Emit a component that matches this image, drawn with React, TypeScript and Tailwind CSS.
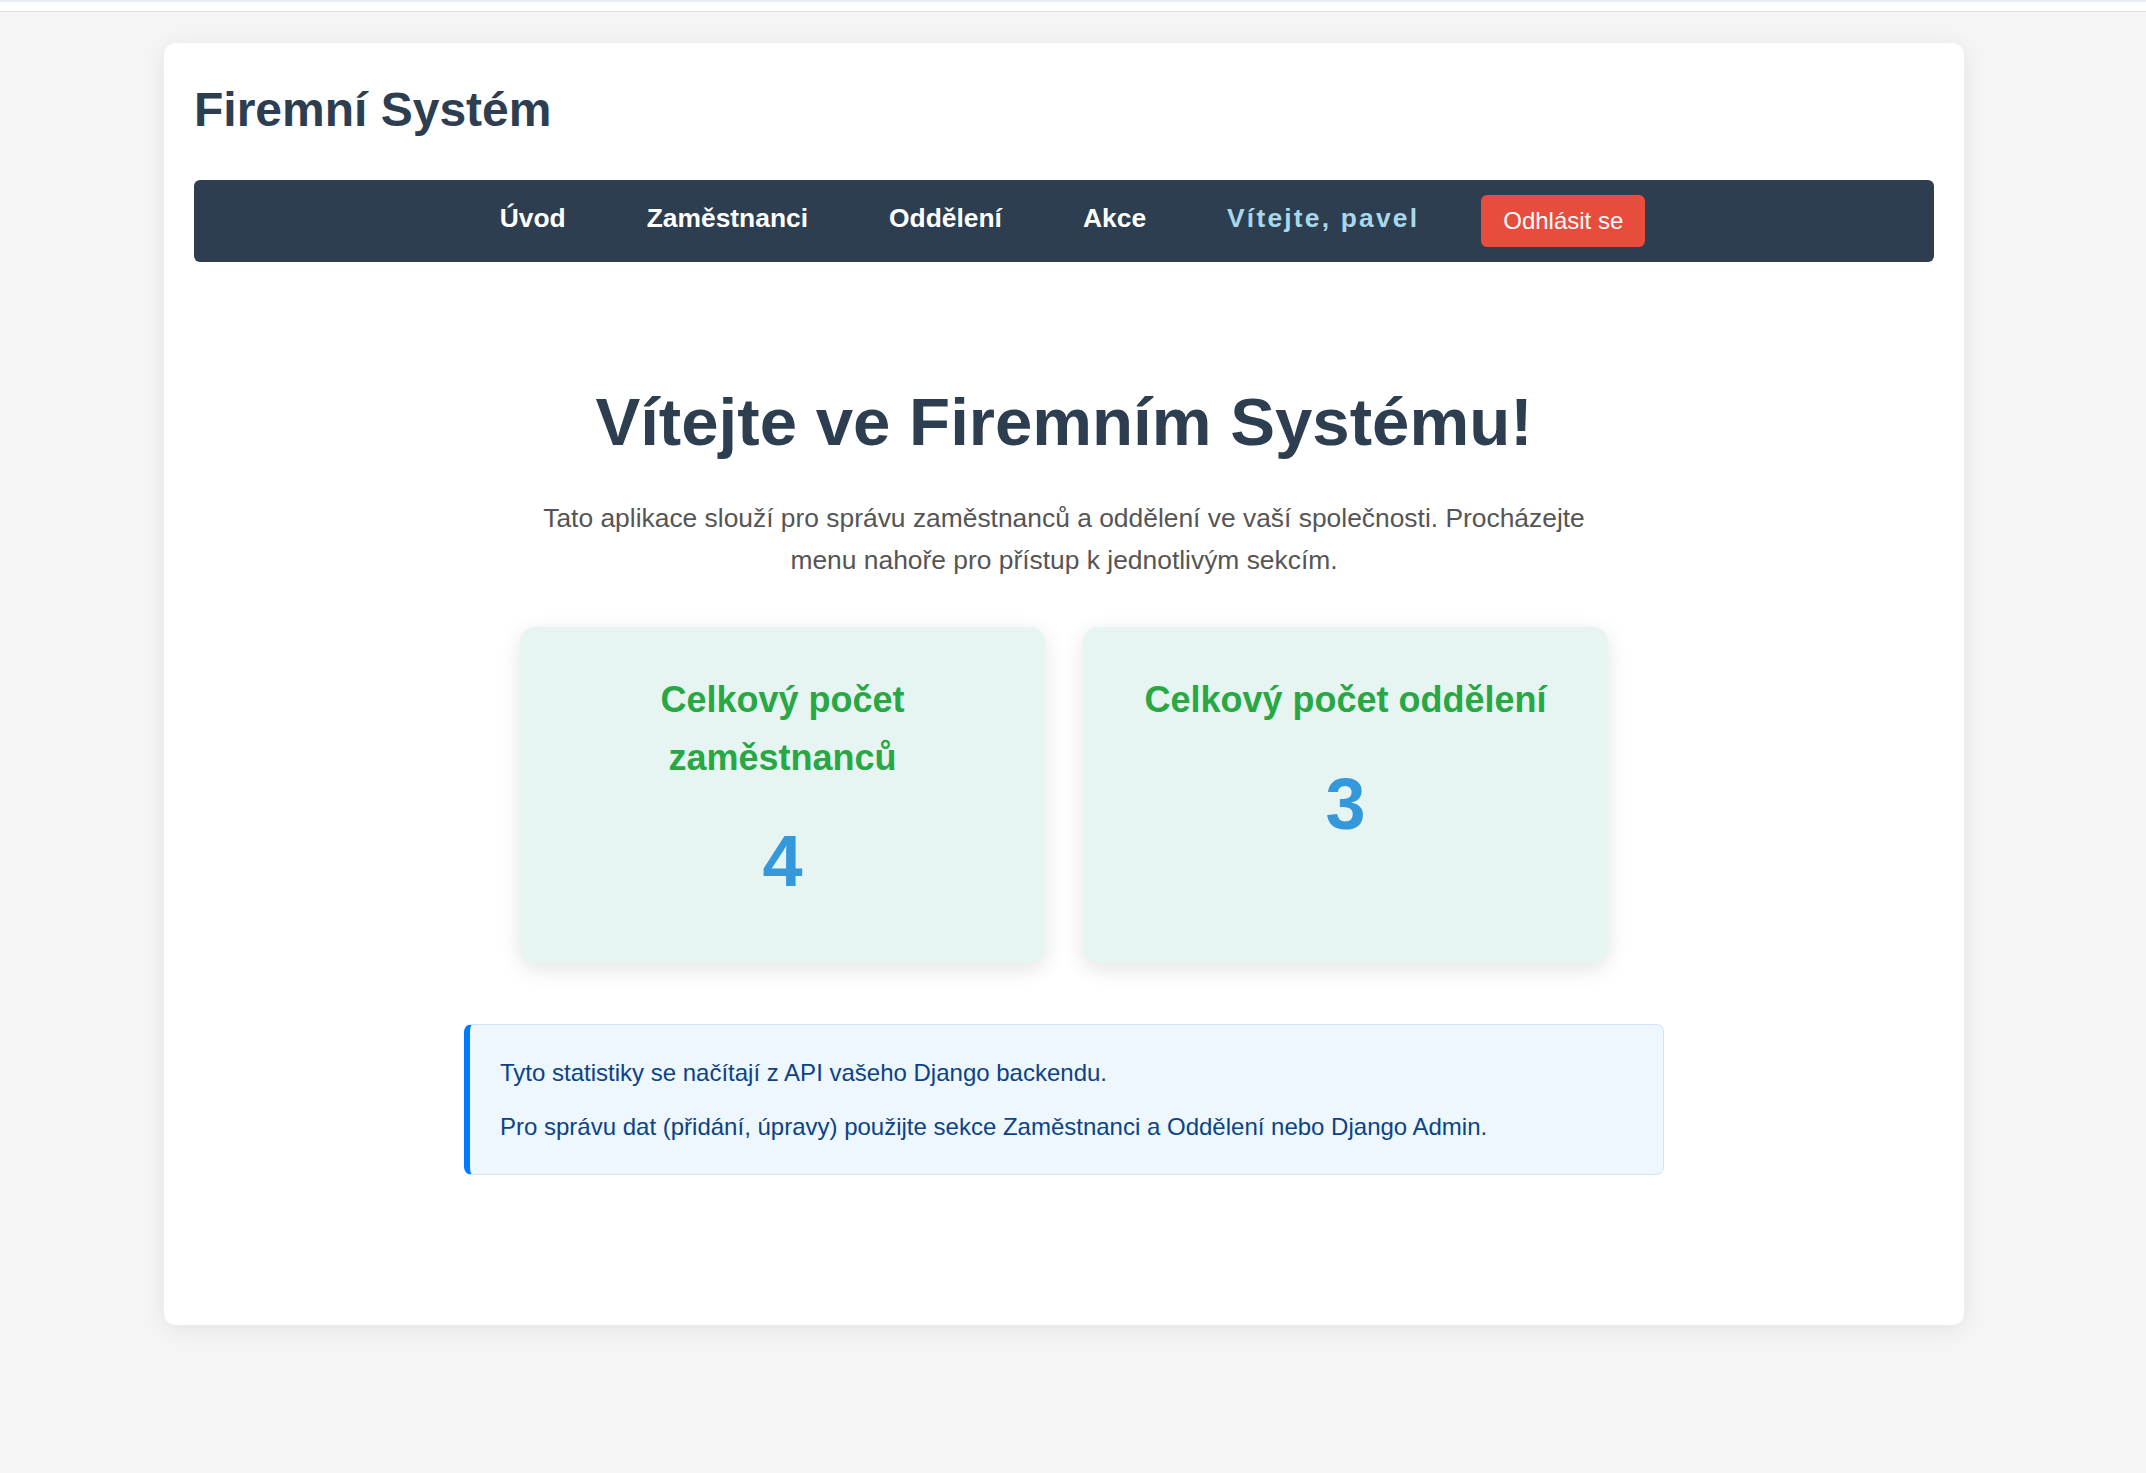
import React from "react";

const font = { fontFamily: '"Liberation Sans", Arial, Helvetica, sans-serif' };

function StatCard({ title, value }: { title: string; value: string }) {
  return (
    <div className="w-[525px] rounded-[15px] bg-[#e6f5f1] px-[30px] pt-[44px] pb-[66px] text-center shadow-[0_6px_22px_rgba(0,0,0,0.11)]">
      <h3 className="text-[36px] font-bold leading-[57.6px] text-[#28a745]">{title}</h3>
      <p className="mt-[39px] text-[72px] font-bold leading-[72px] text-[#3498db]">{value}</p>
    </div>
  );
}

export default function App() {
  const links = ["Úvod", "Zaměstnanci", "Oddělení", "Akce"];
  return (
    <div style={font} className="min-h-screen bg-[#f4f5f4]">
      <div className="h-[12px] border-t-2 border-b border-t-[#e8eef8] border-b-[#e2e4e4] bg-white" />
      <div className="pr-[18px] pt-[31px] pb-[40px]">
        <div className="mx-auto w-[1800px] rounded-[12px] bg-white px-[30px] pt-[38px] pb-[150px] shadow-[0_4px_22px_rgba(0,0,0,0.08)]">
          <h1 className="text-[48px] font-bold leading-[57.6px] text-[#2c3e50]">Firemní Systém</h1>

          <nav className="mt-[41px] flex h-[82px] items-center justify-center rounded-[6px] bg-[#2c3e50] pl-[17px]">
            <ul className="flex items-center gap-[81px] pb-[5px]">
              {links.map((l) => (
                <li key={l}>
                  <a className="text-[26.4px] font-bold leading-[30px] text-white">{l}</a>
                </li>
              ))}
              <li>
                <span className="text-[26.4px] font-bold leading-[30px] tracking-[2.2px] text-[#a8d8ea]">Vítejte, pavel</span>
              </li>
            </ul>
            <button className="ml-[62px] h-[52px] rounded-[6px] bg-[#e74c3c] px-[22px] text-[24px] leading-[27.6px] text-white">
              Odhlásit se
            </button>
          </nav>

          <main className="text-center">
            <h2 className="mt-[120px] text-[67.2px] font-bold leading-[80px] text-[#2c3e50]">
              Vítejte ve Firemním Systému!
            </h2>
            <p className="mx-auto mt-[35px] w-[1050px] text-[26.4px] leading-[42.2px] text-[#555555]">
              Tato aplikace slouží pro správu zaměstnanců a oddělení ve vaší společnosti. Procházejte menu nahoře pro
              přístup k jednotlivým sekcím.
            </p>

            <div className="mt-[46px] flex justify-center gap-[38px]">
              <StatCard title="Celkový počet zaměstnanců" value="4" />
              <StatCard title="Celkový počet oddělení" value="3" />
            </div>

            <div className="mx-auto mt-[61px] w-[1200px] rounded-[8px] border border-l-[6px] border-[#cfe4fb] border-l-[#007bff] bg-[#eef6fe] pl-[30px] pr-[30px] pt-[29px] pb-[28px] text-left text-[24px] leading-[38.4px] text-[#0b4386]">
              <p>Tyto statistiky se načítají z API vašeho Django backendu.</p>
              <p className="mt-[15px]">
                Pro správu dat (přidání, úpravy) použijte sekce Zaměstnanci a Oddělení nebo Django Admin.
              </p>
            </div>
          </main>
        </div>
      </div>
    </div>
  );
}
